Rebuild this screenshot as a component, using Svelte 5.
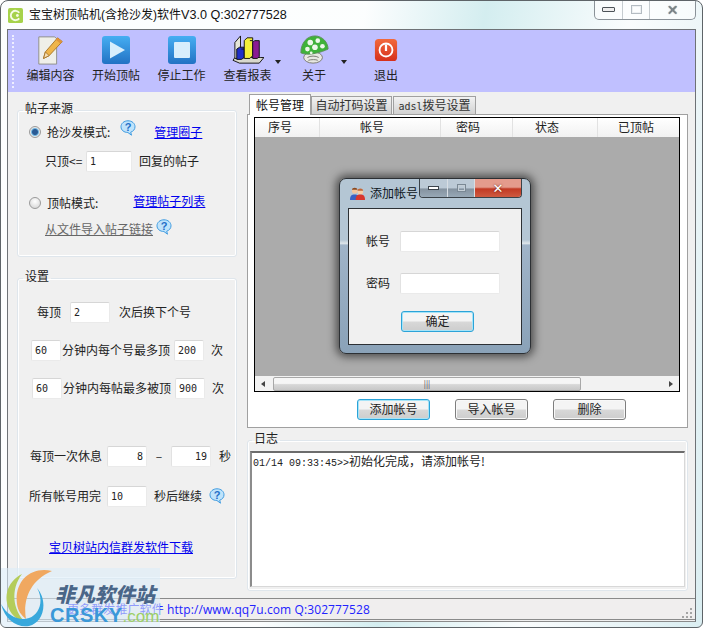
<script>
  const tools = [
    { id: 'edit', label: '编辑内容' },
    { id: 'play', label: '开始顶帖' },
    { id: 'stop', label: '停止工作' },
    { id: 'chart', label: '查看报表', menu: true },
    { id: 'about', label: '关于', menu: true },
    { id: 'quit', label: '退出' }
  ];
  const columns = ['序号', '帐号', '密码', '状态', '已顶帖'];
</script>

{#snippet help(cls = '')}
  <svg class="help {cls}" viewBox="0 0 16 16" aria-hidden="true">
    <path d="M8 .8c4 0 7 2.6 7 6 0 2.6-1.800 4.600-4.300 5.400l.8 3-3.600-2.700C3.800 12.500 1 10 1 6.800 1 3.400 4 .8 8 .8z" fill="#bfe3fb" stroke="#3f9be0" />
    <text x="8" y="11" text-anchor="middle" class="help-mark">?</text>
  </svg>
{/snippet}

{#snippet toolIcon(id)}
  {#if id === 'edit'}
    <svg viewBox="0 0 32 32" class="ti" aria-hidden="true">
      <path d="M3 2h17l2 2v27H3z" fill="#efefe9" stroke="#8e8e86" />
      <path d="M8 25l2-7L23 3l5 4-14 15z" fill="#efb54a" stroke="#a9762a" />
      <path d="M8 25l2-7 4 4z" fill="#f6dfb4" stroke="#a9762a" />
      <path d="M23 3l5 4-2 2-5-4z" fill="#e0953a" />
    </svg>
  {:else if id === 'play'}
    <svg viewBox="0 0 30 30" class="ti box" aria-hidden="true">
      <defs>
        <linearGradient id="blueTile" x1="0" y1="0" x2="0" y2="1">
          <stop offset="0" stop-color="#46aef2" /><stop offset="1" stop-color="#2272c4" />
        </linearGradient>
      </defs>
      <rect x="1" y="1" width="28" height="28" rx="3" fill="url(#blueTile)" />
      <path d="M9 6.500l15 8.500-15 8.500z" fill="#d8eefc" />
    </svg>
  {:else if id === 'stop'}
    <svg viewBox="0 0 30 30" class="ti box" aria-hidden="true">
      <rect x="1" y="1" width="28" height="28" rx="3" fill="url(#blueTile)" />
      <rect x="7" y="7" width="16" height="16" rx="1" fill="#d8eefc" />
    </svg>
  {:else if id === 'chart'}
    <svg viewBox="0 0 34 32" class="ti wide" aria-hidden="true">
      <path d="M1 27l7 3h21l5-6h-4L3 24z" fill="#d8d8cc" stroke="#111" />
      <path d="M3 25V8l6-7v24z" fill="#e6e6d8" stroke="#111" />
      <path d="M5 26V15l3-2h5v11l-3 2z" fill="#2030c8" stroke="#111" />
      <path d="M10 15h3" stroke="#111" />
      <path d="M13 25V6l3-3h6v19l-3 3z" fill="#f2ee3a" stroke="#111" />
      <path d="M19 6h3" stroke="#111" />
      <path d="M22 25V8l2-2h5v17l-2 2z" fill="#8a1a92" stroke="#111" />
    </svg>
  {:else if id === 'about'}
    <svg viewBox="0 0 32 32" class="ti" aria-hidden="true">
      <ellipse cx="15" cy="24" rx="10" ry="6" fill="#e8e8e2" stroke="#77776f" />
      <path d="M9 24c3-2 9-2 12 0M10 27c3-1 8-1 10 0" fill="none" stroke="#77776f" />
      <path d="M2 19C2 8 9 1 17 1c8 0 14 7 14 14-6 3-21 8-29 4z" fill="#3fb23a" stroke="#5c8f58" />
      <g fill="#eef8ea">
        <circle cx="12" cy="8" r="3" /><circle cx="20" cy="6" r="2.500" /><circle cx="9" cy="15" r="2.500" />
        <circle cx="17" cy="13" r="3" /><circle cx="25" cy="12" r="2.500" /><circle cx="13" cy="19" r="1.500" />
      </g>
    </svg>
  {:else}
    <svg viewBox="0 0 26 26" class="ti quit" aria-hidden="true">
      <defs>
        <linearGradient id="redTile" x1="0" y1="0" x2="0" y2="1">
          <stop offset="0" stop-color="#f26a3c" /><stop offset="1" stop-color="#d6301c" />
        </linearGradient>
      </defs>
      <rect x="1" y="1" width="24" height="24" rx="4" fill="url(#redTile)" />
      <circle cx="13" cy="13" r="7" fill="none" stroke="#fff" stroke-width="2" />
      <path d="M13 7v7" stroke="#fff" stroke-width="2.400" />
    </svg>
  {/if}
{/snippet}

<div class="window">
  <header class="titlebar">
    <svg class="appicon" viewBox="0 0 16 16" aria-hidden="true">
      <rect width="16" height="16" rx="2" fill="#a6d24a" />
      <path d="M12 5a5 5 0 1 0 0 6" fill="none" stroke="#f4fbe4" stroke-width="2" />
      <circle cx="10" cy="8" r="1.500" fill="#f4fbe4" />
    </svg>
    <span class="title">宝宝树顶帖机(含抢沙发)软件<span class="ver">V3.0 Q:302777528</span></span>
    <div class="winctl">
      <span class="c-min"><i></i></span>
      <span class="c-max"><i></i></span>
      <span class="c-close">✕</span>
    </div>
  </header>

  <div class="client">
    <nav class="toolbar">
      <span class="grip"></span>
      {#each tools as t}
        <button class="tool">
          <span class="icon-slot">{@render toolIcon(t.id)}</span>
          <span>{t.label}</span>
          {#if t.menu}<i class="caret"></i>{/if}
        </button>
      {/each}
    </nav>

    <div class="body">
      <aside class="left">
        <fieldset class="group source">
          <legend>帖子来源</legend>
          <div class="row r-a">
            <span class="radio on"></span>
            <span class="lbl">抢沙发模式:</span>
            {@render help('h-a')}
            <a href="#a" class="link l-a">管理圈子</a>
          </div>
          <div class="row r-b">
            <span class="only">只顶&lt;=</span>
            <input class="field w46" value="1" readonly />
            <span>回复的帖子</span>
          </div>
          <div class="row r-c">
            <span class="radio"></span>
            <span class="lbl">顶帖模式:</span>
            <a href="#b" class="link l-b">管理帖子列表</a>
          </div>
          <div class="row r-d">
            <a href="#c" class="link muted">从文件导入帖子链接</a>
            {@render help('h-d')}
          </div>
        </fieldset>

        <fieldset class="group settings">
          <legend>设置</legend>
          <div class="row s-a">
            <span>每顶</span>
            <input class="field w40" value="2" readonly />
            <span>次后换下个号</span>
          </div>
          <div class="row s-b">
            <input class="field w30" value="60" readonly />
            <span class="long">分钟内每个号最多顶</span>
            <input class="field w30" value="200" readonly />
            <span class="unit">次</span>
          </div>
          <div class="row s-c">
            <input class="field w30" value="60" readonly />
            <span class="long">分钟内每帖最多被顶</span>
            <input class="field w30" value="900" readonly />
            <span class="unit">次</span>
          </div>
          <div class="row s-d">
            <span class="lead">每顶一次休息</span>
            <input class="field w40 num" value="8" readonly />
            <span class="dash">–</span>
            <input class="field w40 num" value="19" readonly />
            <span class="unit">秒</span>
          </div>
          <div class="row s-e">
            <span class="lead">所有帐号用完</span>
            <input class="field w40" value="10" readonly />
            <span>秒后继续</span>
            {@render help()}
          </div>
          <div class="row s-f">
            <a href="#d" class="link">宝贝树站内信群发软件下载</a>
          </div>
        </fieldset>
      </aside>

      <main class="right">
        <div class="tabs">
          <span class="tab active">帐号管理</span>
          <span class="tab t2">自动打码设置</span>
          <span class="tab t3"><b>adsl</b>拨号设置</span>
        </div>
        <section class="panel">
          <div class="list">
            <div class="thead">
              {#each columns as c}<span>{c}</span>{/each}
            </div>
            <div class="grey"></div>
            <div class="hscroll">
              <i class="arrow left-a"></i>
              <div class="thumb"><span>|||</span></div>
              <i class="arrow right-a"></i>
            </div>

            <div class="dialog">
              <div class="dlg-title">
                <svg class="dlg-icon" viewBox="0 0 16 16" aria-hidden="true">
                  <circle cx="5" cy="5" r="3" fill="#f2c49a" /><path d="M2 4c0-3 6-3 6 0z" fill="#8a4a22" />
                  <path d="M0 15c0-5 2-6 5-6s5 1 5 6z" fill="#3a62c4" />
                  <circle cx="11" cy="6" r="3" fill="#f6cfa8" /><path d="M8 5c0-3 6-3 6 0z" fill="#c2683a" />
                  <path d="M6 15c0-5 2-6 5-6s5 1 5 6z" fill="#d8362e" />
                </svg>
                <span class="dlg-name">添加帐号</span>
                <div class="dlg-ctl">
                  <span class="d-min"><i></i></span>
                  <span class="d-max"><i></i></span>
                  <span class="d-close">✕</span>
                </div>
              </div>
              <div class="dlg-body">
                <div class="dlg-row"><span>帐号</span><input class="field dlg-input" readonly /></div>
                <div class="dlg-row"><span>密码</span><input class="field dlg-input" readonly /></div>
                <button class="btn focus ok">确定</button>
              </div>
            </div>
          </div>
          <div class="actions">
            <button class="btn focus">添加帐号</button>
            <button class="btn">导入帐号</button>
            <button class="btn">删除</button>
          </div>
        </section>

        <fieldset class="group log">
          <legend>日志</legend>
          <div class="logbox"><span class="mono">01/14 09:33:45&gt;&gt;</span>初始化完成，请添加帐号!</div>
        </fieldset>
      </main>
    </div>

    <footer class="status">
      <span>更多群发推广软件 http://www.qq7u.com Q:302777528</span>
      <svg class="sizer" viewBox="0 0 12 12" aria-hidden="true">
        <g fill="#a4a4a4">
          <rect x="9" y="1" width="2" height="2" /><rect x="5" y="5" width="2" height="2" /><rect x="9" y="5" width="2" height="2" />
          <rect x="1" y="9" width="2" height="2" /><rect x="5" y="9" width="2" height="2" /><rect x="9" y="9" width="2" height="2" />
        </g>
      </svg>
    </footer>
  </div>

  <div class="watermark">
    <svg class="wm-logo" viewBox="0 0 56 60" aria-hidden="true">
      <path d="M52 3C30-2 14 14 17 36c1 7 4 11 9 15-3-16 2-38 26-48z" fill="#f0a860" />
      <path d="M22 6C6 14 2 32 12 46c3 4 8 7 13 8C13 42 10 22 22 6z" fill="#b4cc5a" />
      <path d="M37 20c7 12 3 26-8 30-9 3-21-1-28-14 4 16 16 24 28 22 14-3 20-24 8-38z" fill="#38a8dc" />
    </svg>
    <div class="wm-text">
      <span class="wm-cn">非凡软件站</span>
      <span class="wm-en">CRSKY<em>.com</em></span>
    </div>
  </div>
</div>

<style>
  :global(body) {
    background: #fff;
  }

  .window {
    position: relative;
    width: 703px;
    height: 628px;
    box-sizing: border-box;
    padding: 0 6px 7px;
    overflow: hidden;
    border: 1px solid #5e6468;
    border-radius: 8px 8px 6px 6px;
    background:
      linear-gradient(100deg, rgba(255, 255, 255, 0.9) 0 45%, rgba(205, 236, 238, 0.7) 60%, rgba(255, 255, 255, 0.8) 78%, rgba(214, 236, 240, 0.7) 100%),
      #e4f1f4;
    font: 12px "Noto Sans CJK SC", "Liberation Sans", sans-serif;
    color: #111;
  }

  .titlebar {
    display: flex;
    align-items: flex-start;
    height: 28px;
  }

  .appicon {
    width: 15px;
    height: 15px;
    margin: 7px 6px 0 1px;
  }

  .title {
    margin-top: 5px;
    font-size: 12px;
    line-height: 19px;
    font-family: "Liberation Sans", "Noto Sans CJK SC", sans-serif;
    white-space: nowrap;
  }

  .ver {
    font-size: 12.6px;
  }

  .winctl {
    display: flex;
    height: 19px;
    margin: -1px 0 0 auto;
    border: 1px solid #8a9298;
    border-top: 0;
    border-radius: 0 0 5px 5px;
    background: rgba(255, 255, 255, 0.5);
  }

  .winctl span {
    display: flex;
    align-items: center;
    justify-content: center;
    border-right: 1px solid #c6ccd0;
  }

  .c-min {
    width: 27px;
  }

  .c-min i {
    width: 11px;
    height: 3px;
    border: 1px solid #4c5358;
    border-radius: 1px;
    background: #eee;
  }

  .c-max {
    width: 26px;
  }

  .c-max i {
    width: 9px;
    height: 7px;
    border: 1px solid #b4bcc2;
    box-shadow: inset 0 0 0 1px #eef1f3;
  }

  .winctl .c-close {
    width: 45px;
    border: 0;
    color: #7e878e;
    font: bold 14px "DejaVu Sans", sans-serif;
    text-shadow: 0 0 1px #333;
  }

  .client {
    height: 591px;
    border: 1px solid #6e7276;
    background: #f0f0f0;
    border-bottom-color: #8a8a8a;
  }

  .toolbar {
    position: relative;
    display: grid;
    grid-template-columns: 65px 66px 65px 67px 66px 78px;
    height: 62px;
    padding-left: 10px;
    background: #c0c0ff;
  }

  .grip {
    position: absolute;
    left: 4px;
    top: 5px;
    bottom: 4px;
    border-left: 2px dotted #eef;
  }

  .tool {
    position: relative;
    display: flex;
    flex-direction: column;
    align-items: center;
    padding: 5px 0 0;
    border: 0;
    background: none;
    color: #222;
    font: inherit;
    line-height: 17px;
  }

  .icon-slot {
    display: flex;
    align-items: center;
    justify-content: center;
    height: 30px;
    margin-bottom: 1px;
  }

  .ti {
    width: 30px;
    height: 30px;
  }

  .ti.wide {
    width: 32px;
  }

  .ti.quit {
    width: 24px;
    height: 24px;
  }

  .caret {
    position: absolute;
    right: 0;
    top: 30px;
    border: 3px solid transparent;
    border-top: 4px solid #222;
  }

  .body {
    display: flex;
    height: 506px;
  }

  .left {
    width: 239px;
    flex: none;
    padding-left: 9px;
    box-sizing: border-box;
  }

  .group {
    margin: 0;
    padding: 0;
    min-width: 0;
    box-sizing: border-box;
    border: 1px solid #dfe6ec;
    border-radius: 3px;
    box-shadow: inset 0 0 0 1px #fff;
  }

  .group legend {
    margin-left: 5px;
    padding: 0 2px 4px;
    font-size: 12px;
    line-height: 14px;
    color: #222;
  }

  .source {
    width: 220px;
    height: 156px;
    margin-top: 9px;
  }

  .settings {
    width: 220px;
    height: 310px;
    margin-top: 12px;
  }

  .row {
    display: flex;
    align-items: center;
    height: 22px;
    white-space: nowrap;
    color: #222;
  }

  .row > span:not(.radio),
  .row > a {
    padding-bottom: 2px;
  }

  .radio {
    width: 10px;
    height: 10px;
    border: 1px solid #9a9a9a;
    border-radius: 50%;
    background: radial-gradient(circle at 50% 35%, #fff, #d0d0d0);
  }

  .radio.on {
    background: radial-gradient(circle, #2a5a94 0 2.500px, #6fb4e0 3.500px, #e8e8e8 4.500px);
  }

  .lbl {
    margin-left: 6px;
  }

  .help {
    width: 16px;
    height: 16px;
    flex: none;
  }

  .help-mark {
    font: bold 11px "Liberation Sans", sans-serif;
    fill: #1f6fc8;
  }

  .link {
    color: #0000ee;
    text-decoration: underline;
  }

  .link.muted {
    color: #666;
  }

  .field {
    box-sizing: border-box;
    height: 21px;
    padding: 0 3px;
    border: 1px solid #eaeaea;
    border-top-color: #d6d6d6;
    border-left-color: #e2e2e2;
    border-radius: 2px;
    background: #fff;
    color: #222;
    outline: none;
    font: 10px "DejaVu Sans Mono", monospace;
  }

  .w46 {
    width: 46px;
  }

  .w40 {
    width: 40px;
  }

  .w30 {
    width: 30px;
  }

  .num {
    text-align: right;
  }

  /* group one rows */
  .r-a {
    margin: 2px 0 0 11px;
  }

  .h-a {
    margin-left: 10px;
    margin-top: -8px;
  }

  .l-a {
    margin-left: 18px;
  }

  .r-b {
    margin: 7px 0 0 27px;
    gap: 7px;
  }

  .only {
    width: 34px;
  }

  .r-c {
    margin: 20px 0 0 11px;
  }

  .l-b {
    margin-left: 35px;
    margin-top: -3px;
  }

  .r-d {
    margin: 4px 0 0 27px;
  }

  .h-d {
    margin: -4px 0 0 3px;
  }

  /* settings rows */
  .s-a {
    margin: 14px 0 0 19px;
    gap: 9px;
  }

  .s-b {
    margin: 16px 0 0 13px;
  }

  .s-c {
    margin: 16px 0 0 14px;
  }

  .long {
    width: 112px;
    margin-left: 1px;
  }

  .s-b .unit,
  .s-c .unit {
    margin-left: 7px;
  }

  .s-d {
    margin: 46px 0 0 12px;
  }

  .lead {
    width: 77px;
  }

  .dash {
    width: 24px;
    text-align: center;
  }

  .s-d .unit {
    margin-left: 8px;
  }

  .s-e {
    margin: 18px 0 0 11px;
    gap: 7px;
  }

  .s-e .lead {
    width: 71px;
  }

  .s-f {
    margin: 29px 0 0 31px;
  }

  .right {
    width: 441px;
    flex: none;
  }

  .tabs {
    display: flex;
    align-items: flex-end;
    height: 22px;
    padding-left: 2px;
    position: relative;
    z-index: 1;
  }

  .tab {
    display: block;
    box-sizing: border-box;
    height: 18px;
    border: 1px solid #a0a0a0;
    border-bottom: 0;
    background: linear-gradient(#f2f2f2, #d2d2d2);
    color: #333;
    line-height: 16px;
    text-align: center;
  }

  .tab.active {
    width: 62px;
    height: 21px;
    margin-bottom: -1px;
    background: #fff;
    color: #111;
    line-height: 19px;
  }

  .t2 {
    width: 81px;
  }

  .t3 {
    width: 83px;
    margin-left: 1px;
  }

  .t3 b {
    font: 10px "DejaVu Sans Mono", monospace;
  }

  .panel {
    box-sizing: border-box;
    height: 314px;
    padding: 2px 7px 0 6px;
    border: 1px solid #a0a0a0;
    background: #fff;
  }

  .list {
    position: relative;
    display: flex;
    flex-direction: column;
    height: 275px;
    border: 1px solid #000;
    box-sizing: border-box;
    background: #fff;
  }

  .thead {
    display: grid;
    grid-template-columns: 65px 121px 72px 85px 1fr;
    height: 19px;
    flex: none;
    background: linear-gradient(#fff, #f1f1f1);
    line-height: 18px;
    color: #222;
  }

  .thead span {
    border-right: 1px solid #e2e2e2;
  }

  .thead span:nth-child(1) {
    padding-left: 13px;
  }

  .thead span:nth-child(2) {
    padding-left: 40px;
  }

  .thead span:nth-child(3) {
    padding-left: 15px;
  }

  .thead span:nth-child(4) {
    padding-left: 22px;
  }

  .thead span:nth-child(5) {
    padding-left: 20px;
    border-right: 0;
  }

  .grey {
    flex: 1;
    background: #ababab;
  }

  .hscroll {
    position: relative;
    display: flex;
    align-items: center;
    height: 15px;
    flex: none;
    background: #f2f2f2;
  }

  .arrow {
    width: 0;
    height: 0;
    border: 3px solid transparent;
  }

  .left-a {
    margin-left: 3px;
    border-right: 4px solid #444;
  }

  .right-a {
    margin-left: auto;
    margin-right: 3px;
    border-left: 4px solid #444;
  }

  .thumb {
    width: 308px;
    height: 14px;
    margin-left: 8px;
    border: 1px solid #a8a8a8;
    border-radius: 2px;
    box-sizing: border-box;
    background: linear-gradient(#f6f6f6 0 45%, #d8d8d8 55%, #c8c8c8);
    font-size: 8px;
    line-height: 12px;
    text-align: center;
    color: #444;
  }

  .dialog {
    position: absolute;
    left: 84px;
    top: 60px;
    width: 192px;
    height: 176px;
    box-sizing: border-box;
    display: flex;
    flex-direction: column;
    padding: 0 8px 8px;
    border: 1px solid #2c3034;
    border-radius: 7px;
    background: linear-gradient(#b4c6d4 0 35%, #dfe6ea 37%, #a0b4c8 38%, #8aa2b8 100%);
    box-shadow: 0 0 9px 3px rgba(0, 0, 0, 0.55);
  }

  .dlg-title {
    display: flex;
    align-items: flex-start;
    height: 29px;
    flex: none;
  }

  .dlg-icon {
    width: 15px;
    height: 15px;
    margin: 7px 5px 0 2px;
  }

  .dlg-name {
    margin-top: 5px;
    color: #0c1420;
    line-height: 17px;
  }

  .dlg-ctl {
    display: flex;
    height: 18px;
    margin-left: auto;
    border: 1px solid #3a4248;
    border-top: 0;
    border-radius: 0 0 4px 4px;
    overflow: hidden;
  }

  .dlg-ctl span {
    display: flex;
    align-items: center;
    justify-content: center;
    border-right: 1px solid #d8dee4;
    background: linear-gradient(#bccad6 0 50%, #84929f 55%, #98a8b6);
  }

  .d-min {
    width: 27px;
  }

  .d-min i {
    width: 9px;
    height: 2px;
    border: 1px solid #3c444c;
    background: #fff;
  }

  .d-max {
    width: 26px;
  }

  .d-max i {
    width: 7px;
    height: 6px;
    border: 1px solid #7a8894;
    box-shadow: inset 0 0 0 1px #c4ced6;
  }

  .dlg-ctl .d-close {
    width: 46px;
    border: 0;
    background: linear-gradient(#e49b8c 0 45%, #c23a24 55%, #cf5a40);
    color: #fff;
    font: bold 13px "DejaVu Sans", sans-serif;
    text-shadow: 0 0 2px #5a1208;
  }

  .dlg-body {
    display: flex;
    flex-direction: column;
    flex: 1;
    box-sizing: border-box;
    padding-top: 22px;
    border: 1px solid #2c3034;
    background: #f0f0f0;
  }

  .dlg-row {
    display: flex;
    align-items: center;
    gap: 10px;
    height: 21px;
    margin: 0 0 21px 17px;
    color: #222;
  }

  .dlg-row span {
    padding-bottom: 2px;
  }

  .dlg-input {
    width: 100px;
  }

  .ok {
    align-self: flex-start;
    margin: -4px 0 0 52px;
  }

  .actions {
    display: flex;
    gap: 25px;
    padding: 7px 0 0 103px;
  }

  .btn {
    width: 73px;
    height: 21px;
    padding: 0 0 2px;
    border: 1px solid #7e7e7e;
    border-radius: 3px;
    background: linear-gradient(#f4f4f4 0 48%, #d8d8d8 52%, #cdcdcd);
    font: inherit;
    line-height: 15px;
    color: #222;
    box-shadow: inset 0 0 0 1px #f8f8f8;
  }

  .btn.focus {
    border-color: #2ba3d8;
    box-shadow: inset 0 0 0 1px #a6e4f8;
  }

  .log {
    height: 160px;
    margin-top: 3px;
  }

  .log legend {
    margin-left: 4px;
  }

  .logbox {
    box-sizing: border-box;
    height: 136px;
    margin: 2px 2px 0 2px;
    padding: 1px;
    border: 1px solid #d8d8d8;
    border-top: 2px solid #6c6c6c;
    border-left: 2px solid #8c8c8c;
    background: #fff;
    color: #222;
    line-height: 14px;
  }

  .mono {
    font: 10px "Liberation Mono", monospace;
  }

  .status {
    display: flex;
    align-items: center;
    box-sizing: border-box;
    height: 22px;
    padding-left: 59px;
    border: solid #8a8a8a;
    border-width: 1px 0;
    background: #f0eeee;
    color: #2222ff;
    font-family: "Open Sans", "Noto Sans CJK SC", sans-serif;
    letter-spacing: 0.1px;
  }

  .sizer {
    width: 12px;
    height: 12px;
    margin: 8px 2px 0 auto;
  }

  .watermark {
    position: absolute;
    left: -1px;
    bottom: -1px;
    display: flex;
    width: 160px;
    height: 60px;
    background: rgba(220, 236, 248, 0.6);
  }

  .wm-logo {
    width: 56px;
    height: 60px;
    flex: none;
  }

  .wm-text {
    display: flex;
    flex-direction: column;
    margin-left: -6px;
    padding-top: 14px;
  }

  .wm-cn {
    margin-left: 5px;
    color: #4a6688;
    font: italic 800 20px/24px "Noto Sans CJK SC", sans-serif;
    white-space: nowrap;
  }

  .wm-en {
    margin-top: -1px;
    color: #3a98d8;
    font: 800 20px/20px "Liberation Sans", sans-serif;
    letter-spacing: 0.5px;
    white-space: nowrap;
  }

  .wm-en em {
    color: #9ccf68;
    font: 400 17px "Liberation Sans", sans-serif;
    letter-spacing: 0;
  }
</style>
